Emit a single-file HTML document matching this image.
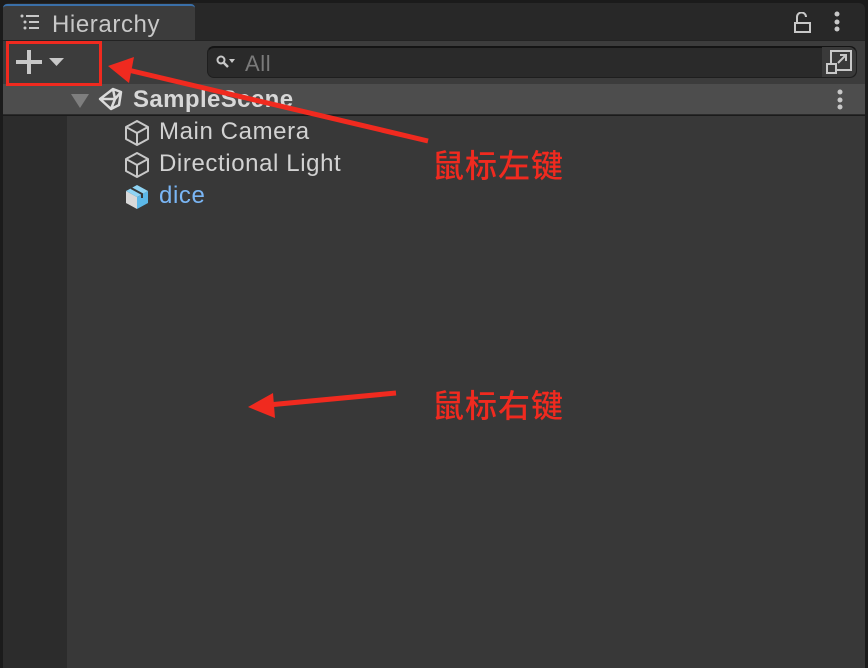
<!DOCTYPE html>
<html><head><meta charset="utf-8"><style>
*{margin:0;padding:0;box-sizing:border-box}
body{width:868px;height:668px;background:#1b1b1b;position:relative;overflow:hidden;font-family:"Liberation Sans","Noto Sans CJK SC",sans-serif}
.abs{position:absolute}
.t{color:#d2d2d2;font-size:24px;white-space:nowrap;letter-spacing:0.6px}
</style></head><body>
<div class="abs" style="left:3px;top:3px;width:862px;height:37px;background:#282828;border-radius:6px 6px 0 0"></div>
<div class="abs" style="left:3px;top:4px;width:192px;height:38px;background:#3c3c3c;border-top:2px solid #3a6fa8;border-radius:4px 4px 0 0"></div>
<svg class="abs" style="left:20px;top:14px" width="22" height="18"><g fill="#c8c8c8"><circle cx="2" cy="2" r="1.5"/><circle cx="5" cy="8" r="1.5"/><circle cx="5" cy="14" r="1.5"/><rect x="6" y="1" width="13" height="2"/><rect x="9" y="7" width="10" height="2"/><rect x="9" y="13" width="10" height="2"/></g></svg>
<div class="abs t" style="left:52px;top:11px;color:#c8c8c8">Hierarchy</div>
<svg class="abs" style="left:794px;top:12px" width="20" height="22"><path d="M3 10 V5 a4.5 4.5 0 0 1 9 0" fill="none" stroke="#c8c8c8" stroke-width="2"/><rect x="1" y="11" width="15" height="9" fill="none" stroke="#c8c8c8" stroke-width="2"/></svg>
<svg class="abs" style="left:832px;top:11px" width="10" height="22"><g fill="#c8c8c8"><circle cx="5" cy="3" r="2.5"/><circle cx="5" cy="11" r="2.5"/><circle cx="5" cy="18" r="2.5"/></g></svg>
<div class="abs" style="left:3px;top:40px;width:862px;height:44px;background:#3c3c3c;border-top:1px solid #232323"></div>
<svg class="abs" style="left:16px;top:50px" width="52" height="24"><rect x="0" y="10" width="26" height="4" fill="#c8c8c8"/><rect x="11" y="-1" width="4" height="26" fill="#c8c8c8"/><path d="M33 8 H48 L40.5 16Z" fill="#c8c8c8"/></svg>
<div class="abs" style="left:207px;top:46px;width:650px;height:32px;background:#2a2a2a;border:1px solid #1e1e1e;border-radius:7px;border-top:2px solid #141414"></div>
<svg class="abs" style="left:216px;top:54px" width="22" height="16"><circle cx="5" cy="6" r="3.5" fill="none" stroke="#c8c8c8" stroke-width="2"/><path d="M7 8 L12 13" stroke="#c8c8c8" stroke-width="2.5"/><path d="M13 5 H19 L16 9Z" fill="#c8c8c8"/></svg>
<div class="abs t" style="left:245px;top:51px;color:#7a7a7a;font-size:22px">All</div>
<div class="abs" style="left:822px;top:47px;width:34px;height:30px;background:#3a3a3a;border-radius:0 7px 7px 0"></div>
<svg class="abs" style="left:826px;top:49px" width="28" height="26"><rect x="5" y="2" width="20" height="19" fill="none" stroke="#c8c8c8" stroke-width="2"/><rect x="1" y="15" width="9" height="9" fill="#3a3a3a" stroke="#c8c8c8" stroke-width="2"/><path d="M12 14 L20 6 M14 6 H20 V12" fill="none" stroke="#c8c8c8" stroke-width="2"/></svg>
<div class="abs" style="left:3px;top:84px;width:862px;height:31px;background:#4d4d4d;border-bottom:1px solid #2a2a2a"></div>
<div class="abs" style="left:6px;top:41px;width:96px;height:45px;border:3px solid #f02a1f;z-index:2"></div>
<svg class="abs" style="left:70px;top:93px" width="20" height="16"><path d="M1 1 H19 L10 15Z" fill="#7e7e7e"/></svg>
<svg class="abs" style="left:97px;top:87px" width="28" height="24"><path d="M3 12 L16 2 L24 5 L22 18 L14 22 L3 12Z M3 12 H18 M16 2 L18 12 L14 22 M18 12 L24 5" fill="none" stroke="#dcdcdc" stroke-width="2.5" stroke-linejoin="round"/></svg>
<div class="abs t" style="left:133px;top:86px;font-weight:bold;color:#d8d8d8;letter-spacing:0.4px">SampleScene</div>
<svg class="abs" style="left:835px;top:89px" width="10" height="22"><g fill="#c8c8c8"><circle cx="5" cy="3" r="2.5"/><circle cx="5" cy="11" r="2.5"/><circle cx="5" cy="18" r="2.5"/></g></svg>
<div class="abs" style="left:3px;top:116px;width:64px;height:552px;background:#2c2c2c"></div>
<div class="abs" style="left:67px;top:116px;width:798px;height:552px;background:#383838"></div>
<div class="abs" style="left:865px;top:0;width:3px;height:668px;background:#1b1b1b"></div>
<svg class="abs" style="left:123px;top:119px" width="28" height="28"><path d="M14 2 L25 8 V20 L14 26 L3 20 V8Z M3 8 L14 14 L25 8 M14 14 V26" fill="none" stroke="#c8c8c8" stroke-width="2" stroke-linejoin="round"/></svg>
<div class="abs t" style="left:159px;top:118px">Main Camera</div>
<svg class="abs" style="left:123px;top:151px" width="28" height="28"><path d="M14 2 L25 8 V20 L14 26 L3 20 V8Z M3 8 L14 14 L25 8 M14 14 V26" fill="none" stroke="#c8c8c8" stroke-width="2" stroke-linejoin="round"/></svg>
<div class="abs t" style="left:159px;top:150px">Directional Light</div>
<svg class="abs" style="left:123px;top:183px" width="28" height="28"><path d="M3 8 L14 14 V26 L3 20Z" fill="#d8d8d8"/><path d="M14 14 L25 8 V20 L14 26Z" fill="#5cb8e8"/><path d="M3 8 L14 2 L25 8 L14 14Z" fill="#8fd4f4"/><path d="M8 5 L19 11 V15" stroke="#383838" stroke-width="2" fill="none"/></svg>
<div class="abs t" style="left:159px;top:182px;color:#7ab6f5">dice</div>
<svg class="abs" style="left:0;top:0;z-index:3" width="868" height="668"><g fill="#f02a1f" stroke="#f02a1f"><line x1="428" y1="141" x2="128" y2="70" stroke-width="5"/><path d="M108 66 L134 57 L129 83Z" stroke="none"/><line x1="396" y1="393" x2="268" y2="405" stroke-width="5"/><path d="M248 407 L273 393 L275 418Z" stroke="none"/></g></svg>
<div class="abs" style="left:432px;top:141px;color:#f02a1f;font-size:32px;font-family:'Noto Sans CJK SC',sans-serif;font-weight:500;letter-spacing:1px">鼠标左键</div>
<div class="abs" style="left:432px;top:381px;color:#f02a1f;font-size:32px;font-family:'Noto Sans CJK SC',sans-serif;font-weight:500;letter-spacing:1px">鼠标右键</div>
</body></html>
